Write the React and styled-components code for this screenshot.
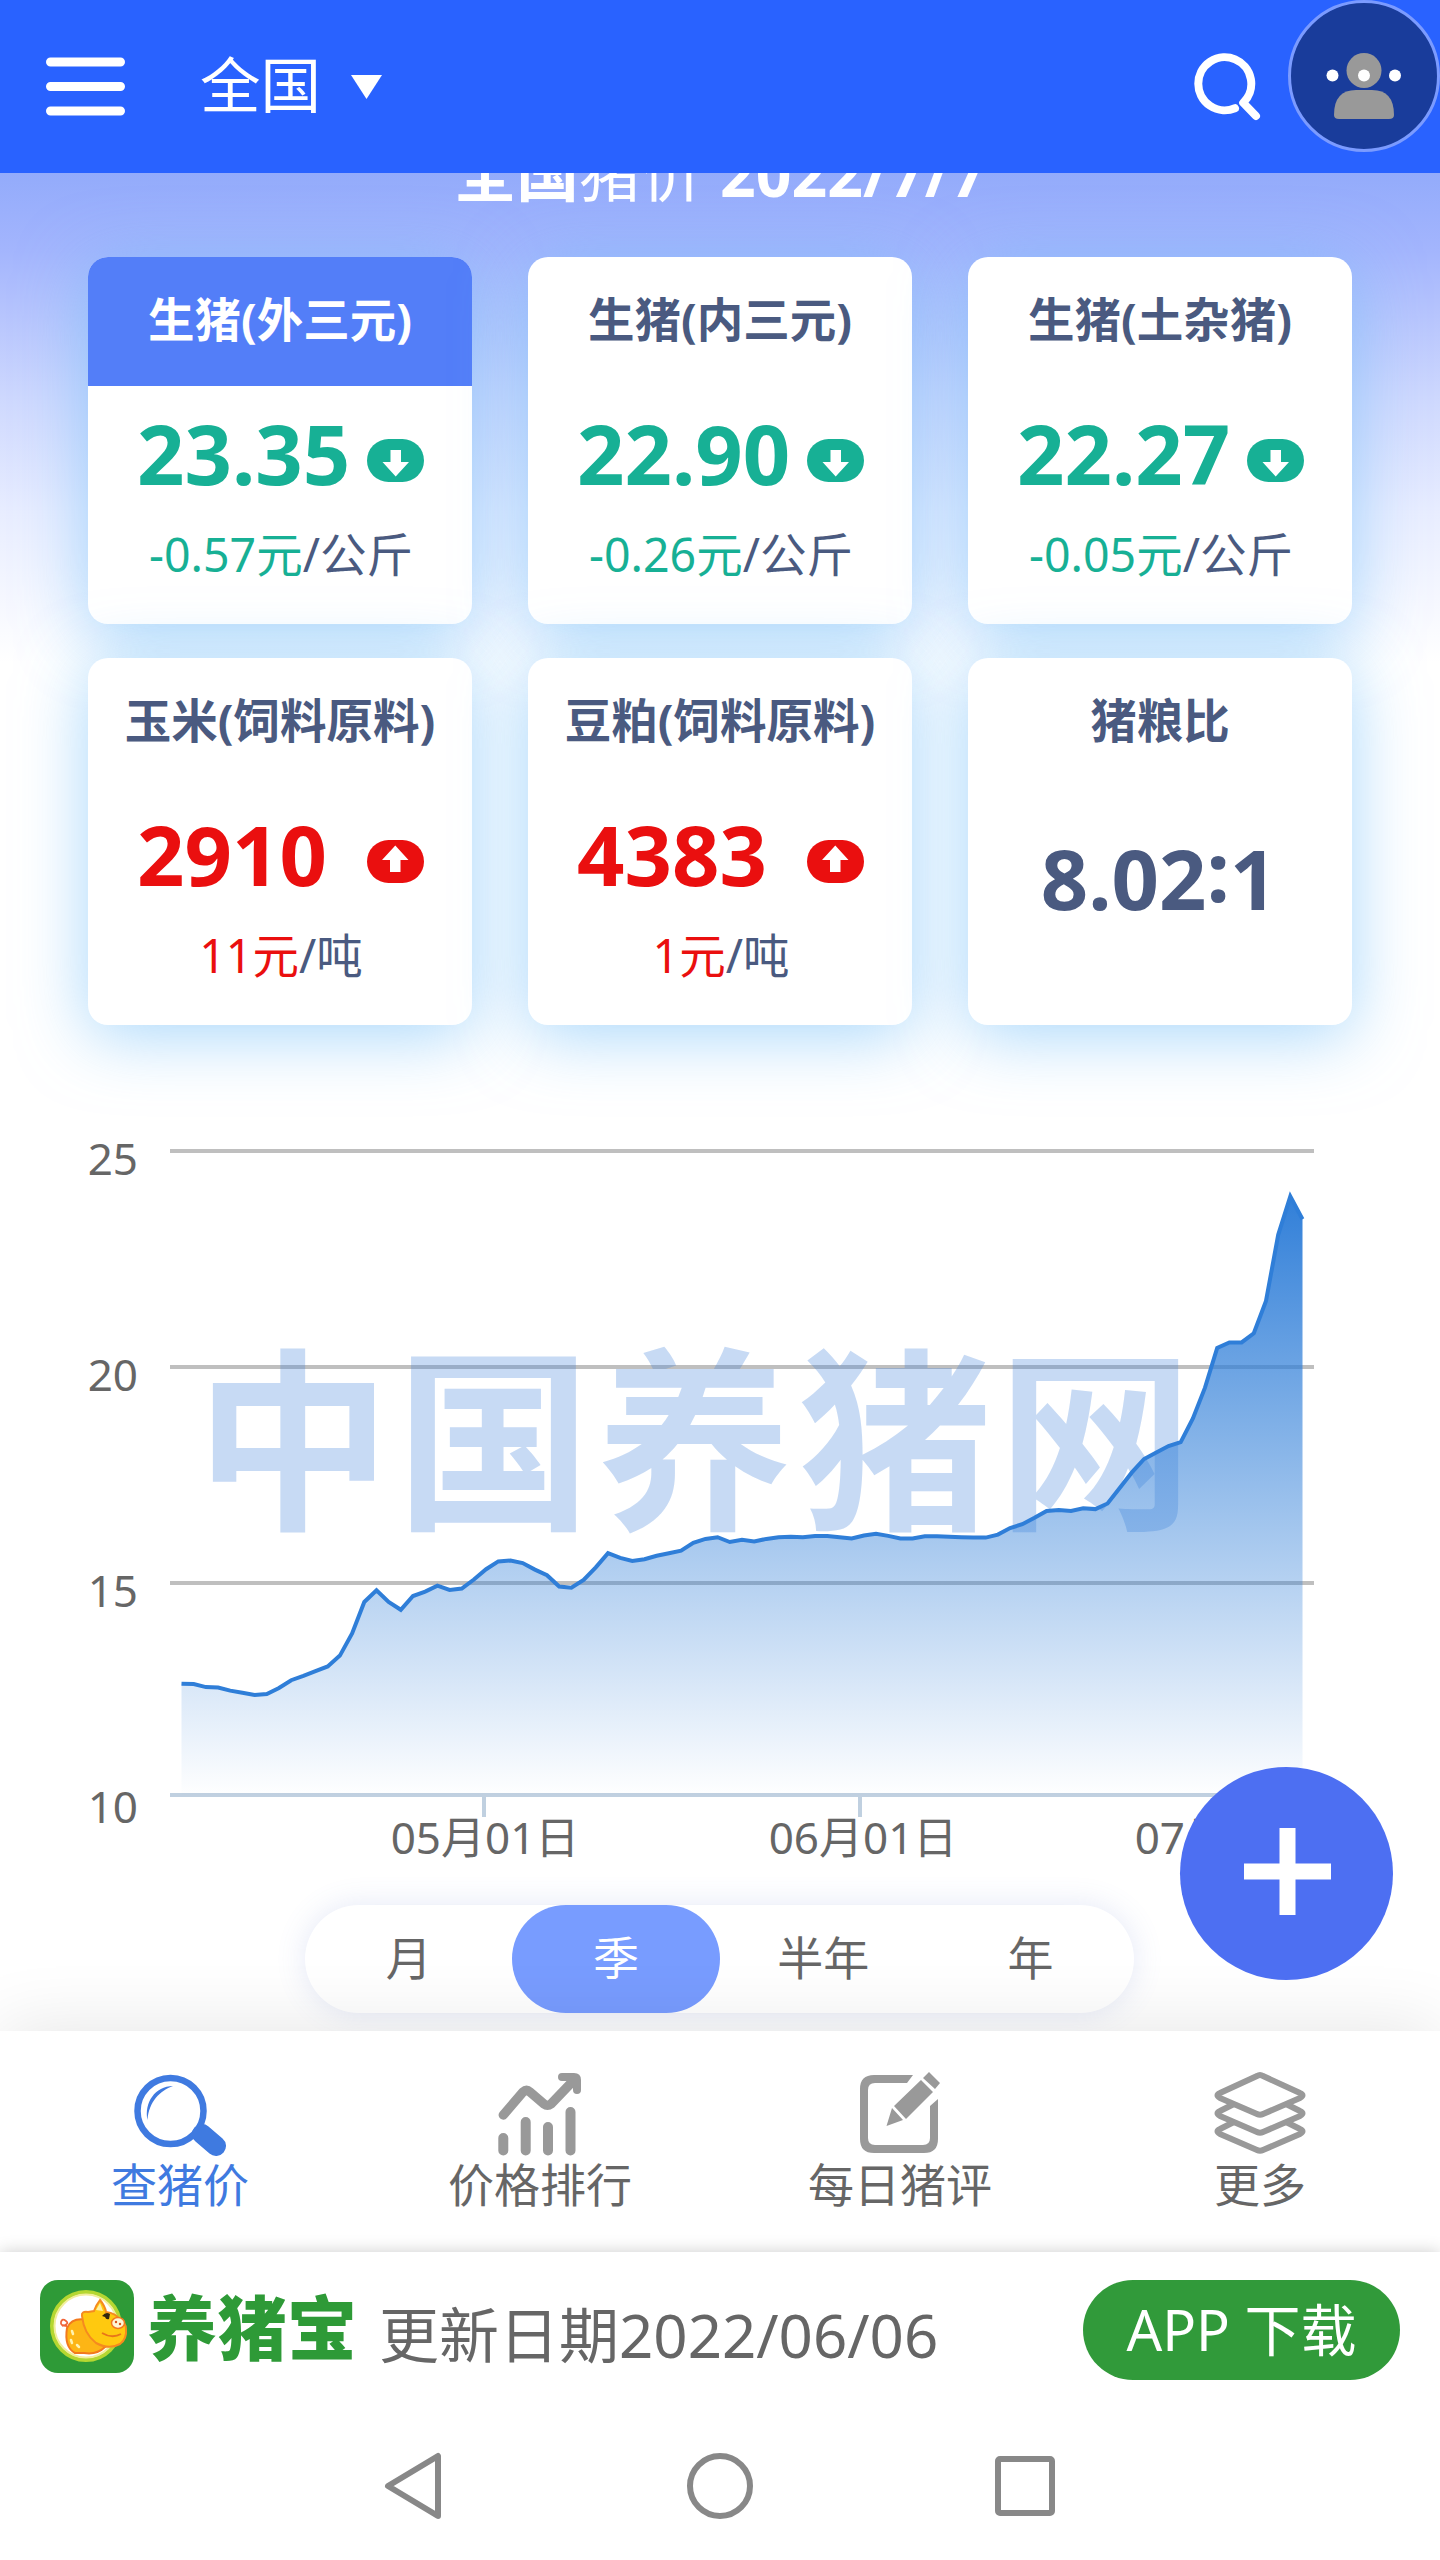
import React, { useState } from 'react'
import styled, { createGlobalStyle } from 'styled-components'

const GlobalStyle = createGlobalStyle`
  * {
    box-sizing: border-box;
  }

  body {
    margin: 0;
    background: #fff;
    font-family: 'Noto Sans', 'Noto Sans CJK SC', sans-serif;
    color: #666;
  }

  svg {
    display: block;
    flex: none;
  }
`

const Page = styled.div`
  position: relative;
  width: 1440px;
  height: 2560px;
  display: flex;
  flex-direction: column;
  overflow: hidden;
  background: #fff;
`

const Header = styled.header`
  height: 173px;
  flex: none;
  display: flex;
  align-items: center;
  padding-left: 46px;
  background: #2962ff;
  color: #fff;
`

const Region = styled.div`
  margin-left: 75px;
  padding-bottom: 3px;
  font-size: 60.5px;
  line-height: 80px;
  white-space: nowrap;
`

const Caret = styled.svg`
  margin-left: 30px;
`

const SearchIcon = styled.svg`
  margin-left: auto;
  margin-right: 26px;
`

const Avatar = styled.svg`
  align-self: flex-start;
`

const Content = styled.main`
  height: 1858px;
  flex: none;
  overflow: hidden;
  background: linear-gradient(#93abfb 0, #a3b5fd 77px, #b6c4fd 140px, #cfd9fe 230px, #e8edff 340px, #fff 490px);
`

const Title = styled.h1`
  height: 114px;
  margin: -30px 0 0;
  font-size: 62.5px;
  line-height: 60px;
  font-weight: 700;
  text-align: center;
  color: #fff;

  span {
    font-weight: 400;
  }
`

const Cards = styled.section`
  display: grid;
  grid-template-columns: repeat(3, 384px);
  grid-auto-rows: 367px;
  gap: 34px 56px;
  padding: 0 88px;
`

const Card = styled.article`
  border-radius: 20px;
  background: #fff;
  box-shadow: 0 10px 68px rgba(110, 188, 248, 0.6);
  color: #4a5a80;
  text-align: center;
`

const CardName = styled.h2`
  height: 129px;
  margin: 0;
  border-radius: 20px 20px 0 0;
  font-size: 46.5px;
  line-height: 125px;
  font-weight: 700;
  white-space: nowrap;
  background: ${props => (props.$active ? '#537ef8' : 'transparent')};
  color: ${props => (props.$active ? '#fff' : '#4a5a80')};
`

const tones = { down: '#17b095', up: '#ea0f0f' }

const PriceRow = styled.div`
  height: 131px;
  display: flex;
  align-items: center;
  justify-content: space-between;
  padding: 3px 48px 0 49px;
  color: ${props => tones[props.$tone]};

  svg {
    margin-top: 14px;
  }
`

const Price = styled.strong`
  font-size: 83px;
  line-height: 100px;
  font-weight: 700;
`

const Ratio = styled(Price)`
  display: block;
  line-height: 182px;
  padding-right: 2px;

  span {
    display: inline-block;
    transform: translateY(-8px);
  }
`

const Delta = styled.div`
  padding-left: 2px;
  font-size: 46.5px;
  line-height: 75px;
  white-space: nowrap;

  span {
    color: ${props => tones[props.$tone]};
  }
`

const Chart = styled.svg`
  margin-top: 60px;

  text {
    font-size: 44px;
    fill: #666;
  }

  .watermark {
    font-family: 'Noto Sans CJK SC', sans-serif;
    font-size: 195px;
    letter-spacing: 5.5px;
    font-weight: 700;
    fill: rgba(68, 132, 218, 0.3);
  }
`

const Periods = styled.div`
  width: 829px;
  height: 108px;
  margin: 20px 0 0 305px;
  display: grid;
  grid-template-columns: repeat(4, 1fr);
  border-radius: 54px;
  background: #fff;
  box-shadow: 0 0 30px rgba(90, 110, 200, 0.16);
`

const Period = styled.button`
  border: 0;
  border-radius: 54px;
  padding: 0 0 8px;
  font: inherit;
  font-size: 46px;
  background: ${props => (props.$active ? '#789cff' : 'transparent')};
  color: ${props => (props.$active ? '#fff' : '#666')};
`

const TabBar = styled.nav`
  position: relative;
  height: 221px;
  flex: none;
  display: grid;
  grid-template-columns: repeat(4, 1fr);
  background: #fff;
  box-shadow: 0 0 70px rgba(0, 0, 0, 0.11);
`

const Tab = styled.a`
  display: flex;
  flex-direction: column;
  align-items: center;
  padding-top: 40px;
  font-size: 46px;
  line-height: 54px;
  color: ${props => (props.$active ? '#3f7ae0' : '#666')};
`

const Banner = styled.aside`
  position: relative;
  height: 160px;
  flex: none;
  display: flex;
  align-items: flex-start;
  padding: 28px 40px 0;
  background: #fff;
  box-shadow: 0 0 16px rgba(0, 0, 0, 0.2);
`

const Brand = styled.div`
  margin-left: 13px;
  font-family: 'Noto Sans CJK SC', sans-serif;
  font-size: 70px;
  line-height: 90px;
  font-weight: 900;
  color: #2e9a37;
`

const Updated = styled.div`
  margin-left: 22px;
  font-size: 60px;
  line-height: 110px;
  white-space: nowrap;
`

const Download = styled.a`
  width: 317px;
  height: 100px;
  margin-left: auto;
  border-radius: 50px;
  background: #319a3a;
  color: #fff;
  font-size: 56px;
  line-height: 98px;
  text-align: center;
  white-space: nowrap;
`

const SystemBar = styled.footer`
  position: relative;
  height: 148px;
  flex: none;
  display: flex;
  align-items: center;
  justify-content: center;
  background: #fff;
`

const AddButton = styled.button`
  position: absolute;
  left: 1180px;
  top: 1767px;
  width: 213px;
  height: 213px;
  padding: 0;
  border: 0;
  border-radius: 50%;
  background: #4d6ff2;
`

const cards = [
  { name: '生猪(外三元)', price: '23.35', tone: 'down', delta: '-0.57元', unit: '/公斤', active: true },
  { name: '生猪(内三元)', price: '22.90', tone: 'down', delta: '-0.26元', unit: '/公斤' },
  { name: '生猪(土杂猪)', price: '22.27', tone: 'down', delta: '-0.05元', unit: '/公斤' },
  { name: '玉米(饲料原料)', price: '2910', tone: 'up', delta: '11元', unit: '/吨' },
  { name: '豆粕(饲料原料)', price: '4383', tone: 'up', delta: '1元', unit: '/吨' },
]

// daily price, 04/06 to 07/07
const prices = [
  12.67, 12.66, 12.59, 12.58, 12.51, 12.46, 12.41, 12.43, 12.57, 12.75, 12.85, 12.96,
  13.07, 13.32, 13.83, 14.56, 14.83, 14.56, 14.38, 14.7, 14.8, 14.94, 14.84, 14.87,
  15.08, 15.32, 15.5, 15.52, 15.46, 15.31, 15.18, 14.92, 14.89, 15.07, 15.36, 15.69,
  15.58, 15.51, 15.55, 15.63, 15.69, 15.75, 15.93, 16.02, 16.06, 15.95, 16, 15.96,
  16.02, 16.06, 16.07, 16.06, 16.09, 16.09, 16.06, 16.03, 16.1, 16.14, 16.09, 16.03,
  16.03, 16.08, 16.08, 16.07, 16.06, 16.05, 16.05, 16.12, 16.27, 16.36, 16.51, 16.67,
  16.69, 16.67, 16.73, 16.71, 16.84, 17.2, 17.56, 17.87, 18.02, 18.17, 18.26, 18.81,
  19.52, 20.44, 20.57, 20.57, 20.78, 21.53, 23.06, 23.95, 23.42,
]

const px = i => 181.5 + i * 12.185
const py = value => 714 - (value - 10) * 43.2

function PriceChart() {
  const line = prices.map((value, i) => `${px(i).toFixed(1)},${py(value).toFixed(1)}`).join(' ')
  return (
    <Chart width="1440" height="800" viewBox="0 0 1440 800">
      <defs>
        <linearGradient id="area" gradientUnits="userSpaceOnUse" x1="0" y1="105" x2="0" y2="712">
          <stop offset="0" stopColor="#2f7ed8" />
          <stop offset="1" stopColor="#2f7ed8" stopOpacity="0" />
        </linearGradient>
      </defs>
      {[25, 20, 15].map(value => (
        <path key={value} d={`M170 ${py(value)}H1314`} stroke="#bfbfbf" strokeWidth="4" />
      ))}
      <path d="M170 710H1314M484 710v22M860 710v22M1224 710v22" stroke="#c0d0e0" strokeWidth="4" />
      <text className="watermark" x="697" y="430" textAnchor="middle">中国养猪网</text>
      <polygon points={`${px(0)},712 ${line} ${px(92)},712`} fill="url(#area)" />
      <polyline points={line} fill="none" stroke="#2f7ed8" strokeWidth="4" />
      {[25, 20, 15, 10].map(value => (
        <text key={value} x="138" y={py(value) + 24} textAnchor="end">{value}</text>
      ))}
      <text x="485" y="769" textAnchor="middle">05月01日</text>
      <text x="863" y="769" textAnchor="middle">06月01日</text>
      <text x="1229" y="769" textAnchor="middle">07月01日</text>
    </Chart>
  )
}

const TrendBadge = ({ tone }) => (
  <svg width="57" height="43" viewBox="0 0 57 43">
    <rect width="57" height="43" rx="21.500" fill={tones[tone]} />
    <path
      d="M23.500 11h10.500v12H42L28.700 37.500 15.500 23h8z"
      fill="#fff"
      transform={tone === 'up' ? 'rotate(180 28.500 21.500)' : undefined}
    />
  </svg>
)

const FindIcon = () => (
  <svg width="100" height="86" viewBox="0 0 100 86" fill="none">
    <circle cx="40.500" cy="40" r="33" stroke="#3f7ae0" strokeWidth="6.500" />
    <path d="M72 63l14 12" stroke="#3f7ae0" strokeWidth="20" strokeLinecap="round" />
    <path d="M17.500 49C14 32 25 15 43 15 30 20 19 30 17.500 49z" fill="#3f7ae0" />
  </svg>
)

const RankIcon = () => (
  <svg width="84" height="86" viewBox="0 0 84 86" fill="none" stroke="#999" strokeWidth="10" strokeLinecap="round" strokeLinejoin="round">
    <path d="M5.300 67v12.500M27.700 51v28.500M50 56v23.500M72.500 41v38.500" />
    <path d="M5.300 44L25 21q3.500-3 7 0l14 12q3.500 2.500 7 0L76 9" strokeWidth="9.500" />
    <path d="M64 6h12q3 0 3 3v10" strokeWidth="8" />
  </svg>
)

const ReviewIcon = () => (
  <svg width="80" height="86" viewBox="0 0 80 86" fill="#999">
    <path d="M53 4H14Q0 4 0 18v50q0 14 14 14h50q14 0 14-14V28l-8 7v32q0 7-7 7H15q-7 0-7-7V19q0-7 7-7h32z" />
    <path d="M34 35L61 9l12 12-27 27zM63 7l6-6 11 11-5 6zM32 37l11 12-16.500 6z" />
  </svg>
)

const LayersIcon = () => (
  <svg width="92" height="86" viewBox="0 0 92 86" fill="none" stroke="#999" strokeWidth="6" strokeLinejoin="round">
    <path d="M43 5q3-2 6 0l37 17q5 2 0 5L49 43q-3 1.500-6 0L6 27q-5-3 0-5z" />
    <path d="M20 33L6 40q-5 2 0 5l37 16q3 1.500 6 0l37-16q5-3 0-5l-14-7" />
    <path d="M20 51L6 58q-5 2 0 5l37 16q3 1.500 6 0l37-16q5-3 0-5l-14-7" />
  </svg>
)

const tabs = [
  { label: '查猪价', Icon: FindIcon },
  { label: '价格排行', Icon: RankIcon },
  { label: '每日猪评', Icon: ReviewIcon },
  { label: '更多', Icon: LayersIcon },
]

const PigLogo = () => (
  <svg width="94" height="93" viewBox="0 0 94 93">
    <rect width="94" height="93" rx="18" fill="#2e9a37" />
    <circle cx="46" cy="46" r="34" fill="#fff" stroke="#b5d731" strokeWidth="4" />
    <circle cx="46" cy="46" r="31.500" fill="none" stroke="#f2ee9b" strokeWidth="2" />
    <path d="M27 46q-7 0-6-4t5-1-4 5" fill="none" stroke="#f0653a" strokeWidth="1.800" />
    <path d="M27 48q5-11 20-8l18 27q-8 8-21 6h-9q-11-6-8-25z" fill="#fdb515" stroke="#f2791d" strokeWidth="2" />
    <path d="M42 36q-1-5 6-4l6-1q2-6 6-11 5 6 6 12 10 1 14 8 6 3 6 9 1 10-6 15-11 6-24-1-12-9-14-27z" fill="#ffc90f" stroke="#f58a1f" strokeWidth="2" />
    <path d="M56 30l4-7 3 8z" fill="#fff0a5" />
    <ellipse cx="78" cy="43" rx="6.500" ry="5.500" fill="#fff6d5" stroke="#f2791d" strokeWidth="1.500" />
    <circle cx="76" cy="42" r="1.200" fill="#d9541e" />
    <circle cx="80" cy="44" r="1.200" fill="#d9541e" />
    <path d="M62 36q4-5 8-2l-1 5q-3 1-4-2z" fill="#33260f" />
    <path d="M62 53q10 6 19 1" fill="none" stroke="#e8751a" strokeWidth="1.800" />
    <path d="M32 51l1 3M31 60l1 3M37 65l2 2" stroke="#fff3b0" strokeWidth="2.500" strokeLinecap="round" />
  </svg>
)

export default function App() {
  const [period, setPeriod] = useState('季')

  return (
    <Page>
      <GlobalStyle />
      <Header>
        <svg width="79" height="60" viewBox="0 0 79 60" stroke="#fff" strokeWidth="9" strokeLinecap="round">
          <path d="M4.500 5h70M4.500 29.500h70M4.500 54h70" />
        </svg>
        <Region>全国</Region>
        <Caret width="31" height="24" viewBox="0 0 31 24"><path d="M0 0h31L15.500 24z" fill="#fff" /></Caret>
        <SearchIcon width="70" height="68" viewBox="0 0 70 68" fill="none" stroke="#fff" strokeWidth="8" strokeLinecap="round" strokeLinejoin="round">
          <path d="M43 55.200A26.500 26.500 0 1 1 51.200 49.800L64 63" />
        </SearchIcon>
        <Avatar width="152" height="153" viewBox="0 0 152 153">
          <circle cx="76" cy="76" r="74.500" fill="#193c9b" stroke="#7b9bff" strokeWidth="3" />
          <circle cx="76" cy="70.500" r="17.500" fill="#999" />
          <path d="M46 115q0-25 22-25h16q22 0 22 25 0 4-5 4H51q-5 0-5-4z" fill="#999" />
          <g fill="#fff">
            <circle cx="44.500" cy="75.500" r="6" />
            <circle cx="76" cy="75.500" r="6" />
            <circle cx="107" cy="75.500" r="6" />
          </g>
        </Avatar>
      </Header>

      <Content>
        <Title>全国<span>猪价</span> 2022/7/7</Title>
        <Cards>
          {cards.map(card => (
            <Card key={card.name}>
              <CardName $active={card.active}>{card.name}</CardName>
              <PriceRow $tone={card.tone}>
                <Price>{card.price}</Price>
                <TrendBadge tone={card.tone} />
              </PriceRow>
              <Delta $tone={card.tone}><span>{card.delta}</span>{card.unit}</Delta>
            </Card>
          ))}
          <Card>
            <CardName>猪粮比</CardName>
            <Ratio>8.02<span>:</span>1</Ratio>
          </Card>
        </Cards>
        <PriceChart />
        <Periods>
          {['月', '季', '半年', '年'].map(label => (
            <Period key={label} $active={label === period} onClick={() => setPeriod(label)}>{label}</Period>
          ))}
        </Periods>
      </Content>

      <TabBar>
        {tabs.map(({ label, Icon }, i) => (
          <Tab key={label} $active={i === 0}>
            <Icon />
            {label}
          </Tab>
        ))}
      </TabBar>

      <Banner>
        <PigLogo />
        <Brand>养猪宝</Brand>
        <Updated>更新日期2022/06/06</Updated>
        <Download>APP 下载</Download>
      </Banner>

      <SystemBar>
        <svg width="672" height="68" viewBox="0 0 672 68" fill="none" stroke="#888" strokeWidth="6" strokeLinejoin="round">
          <path d="M54 4v60L4 34z" />
          <circle cx="336" cy="34" r="30" />
          <rect x="614" y="7" width="54" height="54" rx="2" />
        </svg>
      </SystemBar>

      <AddButton>
        <svg width="213" height="213" viewBox="0 0 213 213" stroke="#fff" strokeWidth="16">
          <path d="M64 104.500h87M107.500 61v87" />
        </svg>
      </AddButton>
    </Page>
  )
}
